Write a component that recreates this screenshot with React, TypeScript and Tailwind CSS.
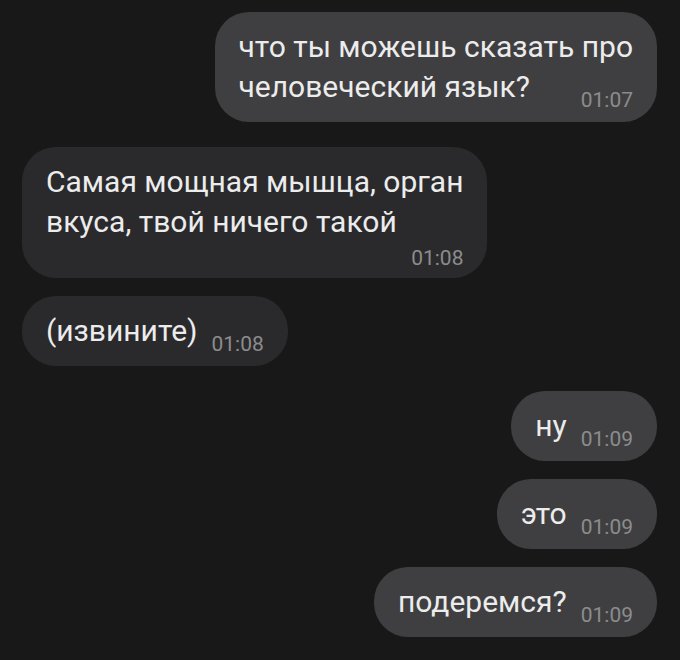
import React from "react";

type Msg = {
  lines: string[];
  time: string;
  out: boolean;
  timeBelow?: boolean;
};

const messages: Msg[] = [
  { lines: ["что ты можешь сказать про", "человеческий язык?"], time: "01:07", out: true },
  { lines: ["Самая мощная мышца, орган", "вкуса, твой ничего такой"], time: "01:08", out: false, timeBelow: true },
  { lines: ["(извините)"], time: "01:08", out: false },
  { lines: ["ну"], time: "01:09", out: true },
  { lines: ["это"], time: "01:09", out: true },
  { lines: ["подеремся?"], time: "01:09", out: true },
];

function Bubble({ msg }: { msg: Msg }) {
  const last = msg.lines.length - 1;
  return (
    <div
      className={`rounded-[34px] pl-[24px] pr-[24px] pt-[15px] text-[30px] leading-[40px] text-[#ececec] ${
        msg.timeBelow ? "pb-[7px]" : "pb-[15px]"
      } ${msg.out ? "self-end mr-[23px] bg-[#3f3f41]" : "self-start ml-[22px] bg-[#2a2a2c]"}`}
    >
      {msg.lines.map((line, i) =>
        i === last && !msg.timeBelow ? (
          <div key={i} className="flex items-baseline justify-between whitespace-nowrap">
            <span>{line}</span>
            <span className="relative top-[10px] ml-[14px] text-[21px] leading-none text-[#8c8c8c]">
              {msg.time}
            </span>
          </div>
        ) : (
          <div key={i} className="whitespace-nowrap">
            {line}
          </div>
        )
      )}
      {msg.timeBelow && (
        <div className="mt-[3px] text-right text-[21px] leading-[26px] text-[#8c8c8c]">
          {msg.time}
        </div>
      )}
    </div>
  );
}

export default function App() {
  return (
    <div className="w-[680px] h-[660px] overflow-hidden bg-[#181818] font-['Roboto',sans-serif]">
      <div className="flex flex-col pt-[12px]">
        {messages.map((m, i) => {
          const prev = messages[i - 1];
          const gap = !prev ? "" : prev.out === m.out ? "mt-[18px]" : "mt-[25px]";
          return (
            <div key={i} className={`flex flex-col ${gap}`}>
              <Bubble msg={m} />
            </div>
          );
        })}
      </div>
    </div>
  );
}
